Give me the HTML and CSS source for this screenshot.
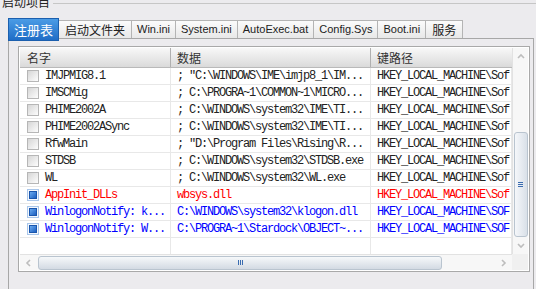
FILE: index.html
```html
<!DOCTYPE HTML>
<html>

<head>
  <meta charset="UTF-8">
  <title>启动项目</title>
  <link rel="stylesheet" href="styles.css">
</head>

<body>
  <div class="group">
    <div class="group-head">
      <span class="group-title">启动项目</span>
      <span class="group-line"></span>
    </div>

    <div class="tabs">
      <div class="tab on">注册表</div>
      <div class="tab cn">启动文件夹</div>
      <div class="tab">Win.ini</div>
      <div class="tab">System.ini</div>
      <div class="tab">AutoExec.bat</div>
      <div class="tab">Config.Sys</div>
      <div class="tab">Boot.ini</div>
      <div class="tab cn">服务</div>
    </div>

    <div class="panel">
      <div class="list">
        <div class="view">
          <div class="row head">
            <div class="cell name">名字</div>
            <div class="cell">数据</div>
            <div class="cell">键路径</div>
          </div>
          <div class="row">
            <div class="cell name"><span class="chk"></span>IMJPMIG8.1</div>
            <div class="cell">; "C:\WINDOWS\IME\imjp8_1\IM...</div>
            <div class="cell">HKEY_LOCAL_MACHINE\Sof</div>
          </div>
          <div class="row">
            <div class="cell name"><span class="chk"></span>IMSCMig</div>
            <div class="cell">; C:\PROGRA~1\COMMON~1\MICRO...</div>
            <div class="cell">HKEY_LOCAL_MACHINE\Sof</div>
          </div>
          <div class="row">
            <div class="cell name"><span class="chk"></span>PHIME2002A</div>
            <div class="cell">; C:\WINDOWS\system32\IME\TI...</div>
            <div class="cell">HKEY_LOCAL_MACHINE\Sof</div>
          </div>
          <div class="row">
            <div class="cell name"><span class="chk"></span>PHIME2002ASync</div>
            <div class="cell">; C:\WINDOWS\system32\IME\TI...</div>
            <div class="cell">HKEY_LOCAL_MACHINE\Sof</div>
          </div>
          <div class="row">
            <div class="cell name"><span class="chk"></span>RfwMain</div>
            <div class="cell">; "D:\Program Files\Rising\R...</div>
            <div class="cell">HKEY_LOCAL_MACHINE\Sof</div>
          </div>
          <div class="row">
            <div class="cell name"><span class="chk"></span>STDSB</div>
            <div class="cell">; C:\WINDOWS\system32\STDSB.exe</div>
            <div class="cell">HKEY_LOCAL_MACHINE\Sof</div>
          </div>
          <div class="row">
            <div class="cell name"><span class="chk"></span>WL</div>
            <div class="cell">; C:\WINDOWS\system32\WL.exe</div>
            <div class="cell">HKEY_LOCAL_MACHINE\Sof</div>
          </div>
          <div class="row red">
            <div class="cell name"><span class="chk on"></span>AppInit_DLLs</div>
            <div class="cell">wbsys.dll</div>
            <div class="cell">HKEY_LOCAL_MACHINE\Sof</div>
          </div>
          <div class="row blue">
            <div class="cell name"><span class="chk on"></span>WinlogonNotify: k...</div>
            <div class="cell">C:\WINDOWS\system32\klogon.dll</div>
            <div class="cell">HKEY_LOCAL_MACHINE\SOF</div>
          </div>
          <div class="row blue">
            <div class="cell name"><span class="chk on"></span>WinlogonNotify: W...</div>
            <div class="cell">C:\PROGRA~1\Stardock\OBJECT~...</div>
            <div class="cell">HKEY_LOCAL_MACHINE\SOF</div>
          </div>
          <div class="row">
            <div class="cell name"></div>
            <div class="cell"></div>
            <div class="cell"></div>
          </div>
        </div>

        <div class="vscroll">
          <div class="arrow">
            <svg width="8" height="6" viewBox="0 0 8 6"><polyline points="1,5 4,2 7,5" /></svg>
          </div>
          <div class="vtrack">
            <div class="vthumb"><i></i><i></i><i></i></div>
          </div>
          <div class="arrow">
            <svg width="8" height="6" viewBox="0 0 8 6"><polyline points="1,1 4,4 7,1" /></svg>
          </div>
        </div>

        <div class="hscroll">
          <div class="arrow">
            <svg width="6" height="8" viewBox="0 0 6 8"><polyline points="5,1 2,4 5,7" /></svg>
          </div>
          <div class="htrack">
            <div class="hthumb"><i></i><i></i><i></i></div>
          </div>
          <div class="arrow">
            <svg width="6" height="8" viewBox="0 0 6 8"><polyline points="1,1 4,4 1,7" /></svg>
          </div>
        </div>

        <div class="corner"></div>
      </div>
    </div>
  </div>
</body>

</html>
```

FILE: styles.css
```css
body {
  margin: 0;
  height: 289px;
  overflow: hidden;
  background: #ecebee;
  color: #222;
  font-family: "Liberation Sans", "Noto Sans CJK SC", sans-serif;
  font-size: 12px;
}

/* 分组标题 */
.group-head {
  display: flex;
  align-items: center;
  height: 14px;
  margin-top: -5px;
  padding-left: 2px;
}

.group-title {
  font-family: "Noto Sans CJK SC", sans-serif;
  font-size: 12px;
  line-height: 14px;
}

.group-line {
  flex: 1;
  height: 1px;
  margin: 3px 0 0 3px;
  background: #c6c6c6;
}

/* 选项卡 */
.tabs {
  position: relative;
  z-index: 1;
  display: flex;
  align-items: flex-end;
  height: 20px;
  margin: 9px 0 0 8px;
}

.tab {
  box-sizing: border-box;
  height: 18px;
  padding: 0 5px;
  border: 1px solid #b4b4b4;
  border-left: 0;
  border-bottom: 0;
  background: linear-gradient(#fbfbfb, #e8e8e8);
  font-size: 11px;
  line-height: 17px;
  white-space: nowrap;
}

.tab.cn {
  font-family: "Noto Sans CJK SC", sans-serif;
  font-size: 12px;
  padding: 0 6px;
}

.tab.on {
  width: 51px;
  height: 23px;
  margin-bottom: -3px;
  padding: 0;
  border: 1px solid #1b5fae;
  background: linear-gradient(#4b9ce6, #1f6dc6);
  color: #fff;
  text-align: center;
  font-family: "Noto Sans CJK SC", sans-serif;
  font-size: 13px;
  line-height: 21px;
}

.panel {
  height: 243px;
  margin: 0 2px 0 8px;
  padding: 7px 3px 0 9px;
  border: 1px solid #a7a7a7;
  border-bottom: 0;
}

/* 列表 */
.list {
  box-sizing: border-box;
  height: 226px;
  padding: 1px;
  border: 1px solid #a9a9a9;
  background: #fff;
  display: grid;
  grid-template-columns: 1fr 16px;
  grid-template-rows: 1fr 16px;
}

.view {
  overflow: hidden;
}

.row {
  box-sizing: border-box;
  display: grid;
  grid-template-columns: 151px 200px 1fr;
  height: 17px;
  border-bottom: 1px solid #e8e8e8;
}

.row.head {
  height: 20px;
  border-bottom: 1px solid #b9b9b9;
  background: linear-gradient(#f8f8f8, #dadada);
}

.cell {
  display: flex;
  align-items: center;
  overflow: hidden;
  padding-left: 6px;
  border-right: 1px solid #e8e8e8;
  white-space: nowrap;
  font-family: "Liberation Mono", monospace;
  font-size: 12px;
  letter-spacing: -1.2px;
}

.cell.name {
  padding-left: 7px;
}

.head .cell {
  border-right-color: #b0b0b0;
  color: #333;
  font-family: "Noto Sans CJK SC", sans-serif;
  font-size: 12px;
  letter-spacing: 0;
}

.head .cell:last-child {
  border-right: 0;
}

.red {
  color: #f00;
}

.blue {
  color: #00f;
}

.chk {
  flex: none;
  box-sizing: border-box;
  width: 12px;
  height: 12px;
  margin-right: 6px;
  border: 1px solid #b6b6b6;
  background: linear-gradient(135deg, #d6d6d6, #fdfdfd);
}

.chk.on {
  display: flex;
  align-items: center;
  justify-content: center;
  border-color: #a9c6ea;
  background: #f4f8fd;
}

.chk.on::after {
  content: "";
  width: 6px;
  height: 6px;
  border: 1px solid #1a56ad;
  background: linear-gradient(135deg, #6aaaf0, #1c5fc0);
}

/* 滚动条 */
.arrow {
  flex: none;
  display: flex;
  align-items: center;
  justify-content: center;
  width: 16px;
  height: 16px;
}

.arrow polyline {
  fill: none;
  stroke: #bdbdbd;
  stroke-width: 1.6;
}

.vscroll {
  display: flex;
  flex-direction: column;
  border-left: 1px solid #e2e2e2;
  background: #f7f7f7;
}

.vtrack {
  flex: 1;
  display: flex;
  justify-content: center;
}

.vthumb {
  box-sizing: border-box;
  width: 14px;
  height: 105px;
  margin-top: 68px;
  border: 1px solid #b9c4cf;
  border-radius: 3px;
  background: linear-gradient(90deg, #f5f7fa, #d9e0e8);
  display: flex;
  flex-direction: column;
  align-items: center;
  justify-content: center;
  gap: 1px;
}

.vthumb i {
  width: 5px;
  height: 1px;
  background: #3a6cb0;
}

.hscroll {
  display: flex;
  align-items: center;
  border-top: 1px solid #e2e2e2;
  background: #f7f7f7;
}

.htrack {
  flex: 1;
  display: flex;
  align-items: center;
}

.hthumb {
  box-sizing: border-box;
  width: 404px;
  height: 14px;
  margin-left: 2px;
  border: 1px solid #b9c4cf;
  border-radius: 3px;
  background: linear-gradient(#f6f8fa, #d3dae3);
  display: flex;
  align-items: center;
  justify-content: center;
  gap: 1px;
}

.hthumb i {
  width: 1px;
  height: 5px;
  background: #3a6cb0;
}

.corner {
  background: #f0f0f0;
}
```
